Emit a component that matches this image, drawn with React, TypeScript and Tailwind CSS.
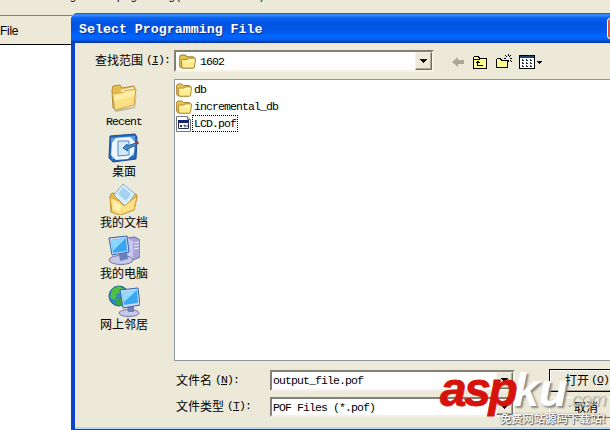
import { ReactNode } from "react";

const mono = "font-['Liberation_Mono','Noto_Sans_CJK_SC',monospace] text-[11.5px] tracking-[-0.9px]";
const cjk = "font-['Noto_Sans_CJK_SC',sans-serif] text-[12px] tracking-normal";

const FolderIcon = ({ className }: { className?: string }) => (
    <svg viewBox="0 0 16 14" className={className}>
        <path d="M.6 3Q.6 1.200 2.200 1h3.600l1.600 1.500h5.400q1.500 0 1.500 1.500v7.500q0 1-1 1.500H3q-2.400-.5-2.400-2z" fill="#e8c54e" stroke="#aa8532" />
        <path d="M2.300 6Q2.500 5 3.600 5h4l1.600-1.200H15q.7 0 .6.9l-1.100 7.500q-.2 1-1.200 1H3.900q-1 0-1.100-1z" fill="#fbed8e" stroke="#a8822e" strokeWidth=".9" />
        <path d="M4 6.500h4l2-1.200h4l-.5 2H4z" fill="#fffbc8" />
    </svg>
);

const PofIcon = () => (
    <svg viewBox="0 0 16 16" className="h-4 w-4">
        <path d="M.5.5h11l3 3v12H.5z" fill="#fff" stroke="#777" />
        <path d="M11.500.5v3h3" fill="#ddd" stroke="#777" />
        <path d="M2.500 4.500h10v8h-10z" fill="#fff" stroke="#222c55" />
        <path d="M2 4h11v3H2z" fill="#14246e" />
        <path d="M4 9h2v2H4zM8.500 8.500h1v3h-1zM7.500 9h1v1h-1zM10.500 9h1v2h-1z" fill="#28306a" />
    </svg>
);

const RecentIcon = () => (
    <svg viewBox="0 0 32 32" className="h-8 w-8">
        <path d="M6 29l20-3 3-15-2 16L8 31z" fill="#8e8762" opacity=".5" />
        <path d="M4 9l1-4 7-1 2 3 12-2 1 3-1 15-19 5-2-1z" fill="#e8bc50" stroke="#b78b35" />
        <path d="M13 9l13-3v4l-12 2z" fill="#fffbe0" />
        <path d="M4.500 12.500l10-1 2-2L28 8l-2 16-19 5z" fill="#fbe184" stroke="#d0a345" />
        <path d="M6 14l9-1 2-2 9-1-.5 5L6 20z" fill="#fff3b5" opacity=".7" />
    </svg>
);

const DesktopIcon = () => (
    <svg viewBox="0 0 32 32" className="h-8 w-8">
        <path d="M2 4l25-2 2 3-1 22-23 3-4-4z" fill="#2869b7" stroke="#1b4d92" />
        <path d="M3 6l24-2-1 20-22 3z" fill="#5fa4e0" />
        <path d="M8 6l14-1 5 5-1 11-6 6-12 1-5-5 1-12z" fill="#edf7ff" />
        <path d="M10 9h11v14l-11 1z" fill="#d4eafb" stroke="#5188bd" />
        <path d="M15 16l4-4v2l9-3 1 2-10 4 1 2z" fill="#4a93d2" stroke="#215b9b" />
        <path d="M27 10.500l3-1.500 1 2.500-3 1z" fill="#943d43" />
    </svg>
);

const DocumentsIcon = () => (
    <svg viewBox="0 0 32 32" className="h-8 w-8">
        <path d="M2 13l2-3 6 1 3 2 15-2 1 3-3 13-14 5-9-3z" fill="#e9bb48" stroke="#b98a31" />
        <path d="M15 1l12 10-9 13L6 12z" fill="#d9effb" stroke="#7faed0" />
        <path d="M15 4l8 7-5 7-8-7z" fill="#a5d2ef" />
        <path d="M2 14l9 4 5 5 13-10-3 14-14 5-8-3z" fill="#fce286" stroke="#d0a03d" />
        <path d="M5 18l8 4-2 7-5-3z" fill="#fff2b1" />
    </svg>
);

const ComputerIcon = () => (
    <svg viewBox="0 0 32 32" className="h-8 w-8">
        <path d="M19 4l8-1 5 3v17l-7 3-7-4z" fill="#a6a4da" stroke="#6c6ba8" />
        <path d="M19 4l6 3v19l-6-4z" fill="#c8c8ef" />
        <path d="M26 9l5-1M26 12l5-1M26 15l5-1" stroke="#eeeeff" />
        <ellipse cx="13" cy="26" rx="12" ry="4.500" fill="#c6c8e8" stroke="#7779a9" />
        <path d="M11 20l8-1 1 6-8 2z" fill="#6c80bb" />
        <path d="M1 4l18-2 2 16L4 21z" fill="#d2daf7" stroke="#3160aa" />
        <path d="M3 6l15-2 1 13-14 2z" fill="#39a5ec" />
        <path d="M3 6l15-2-13 13z" fill="#89d7ff" />
    </svg>
);

const NetworkIcon = () => (
    <svg viewBox="0 0 32 32" className="h-8 w-8">
        <circle cx="11" cy="11" r="10" fill="#2787cf" stroke="#216093" />
        <path d="M4 4l7-3 5 3-3 4-4 1-2 6-5-2z" fill="#54bd45" />
        <path d="M7 14l7-1 3 5-5 3-5-2z" fill="#3aa441" />
        <ellipse cx="21" cy="28" rx="10" ry="3.500" fill="#c6c8e8" stroke="#7779a9" />
        <path d="M19 22l7-1v6h-6z" fill="#6d80ba" />
        <path d="M12 5l18-2 2 17-17 3z" fill="#d2daf7" stroke="#3160aa" />
        <path d="M14 7l15-2 1 13-14 2z" fill="#3aa8ee" />
        <path d="M14 7l15-2-13 12z" fill="#93dcff" />
    </svg>
);

const places = [
    { label: "Recent", icon: <RecentIcon />, latin: true },
    { label: "桌面", icon: <DesktopIcon /> },
    { label: "我的文档", icon: <DocumentsIcon /> },
    { label: "我的电脑", icon: <ComputerIcon /> },
    { label: "网上邻居", icon: <NetworkIcon /> },
];

const files = [
    { name: "db", folder: true },
    { name: "incremental_db", folder: true },
    { name: "LCD.pof", folder: false },
];

const DropButton = () => (
    <div className="flex h-full w-[17px] shrink-0 items-center justify-center border border-t-[#f5f3e8] border-l-[#f5f3e8] border-r-[#716f64] border-b-[#716f64] bg-[#ece9d8] shadow-[inset_-1px_-1px_0_#aca899]">
        <svg viewBox="0 0 7 4" className="h-1 w-[7px]" shapeRendering="crispEdges">
            <path d="M0 0h7v1H0zM1 1h5v1H1zM2 2h3v1H2zM3 3h1v1H3z" />
        </svg>
    </div>
);

const Combo = ({ className, children }: { className: string; children: ReactNode }) => (
    <div className={`flex items-center border-2 border-t-[#808076] border-l-[#808076] border-r-[#f5f3e8] border-b-[#f5f3e8] bg-white ${className}`}>
        <div className="flex flex-1 items-center">{children}</div>
        <DropButton />
    </div>
);

const Label = ({ text, hotkey }: { text: string; hotkey: string }) => (
    <div className={`${mono} flex items-center leading-4`}>
        <span className={cjk}>{text}</span>
        <span className="ml-[3px]">
            (<span className="underline">{hotkey}</span>):
        </span>
    </div>
);

const Toolbar = () => (
    <div className="ml-[17px] flex items-center pt-[1px]">
        <svg viewBox="0 0 14 12" className="h-3 w-[14px]">
            <path d="M1 6l6-5v3h6v4H7v3z" fill="#aca899" />
        </svg>
        <svg viewBox="0 0 16 14" className="ml-[7px] h-[14px] w-4" shapeRendering="crispEdges">
            <path d="M1.500 13.500v-11l1-1h4l1 2h7v10z" fill="#ffff8c" stroke="#000" />
            <path d="M2 4.500h6" stroke="#000" />
            <path d="M5.500 6v4.500H11M4 7.500h4M5 6.500h2" stroke="#000" fill="none" />
        </svg>
        <svg viewBox="0 0 17 16" className="mb-[2px] ml-[8px] h-4 w-[17px]" shapeRendering="crispEdges">
            <path d="M.5 14.500v-8l1-1h3l1 2h6v7z" fill="#ffff8c" stroke="#000" />
            <path d="M12 1v2M12 7v2M8 5h2M14 5h2M9 2h1M14 2h1M10 3h1M13 3h1M10 7h1M14 7h1M15 8h1" stroke="#000" />
        </svg>
        <svg viewBox="0 0 24 14" className="ml-[6px] h-[14px] w-6" shapeRendering="crispEdges">
            <path d="M.5.5h15v13H.5z" fill="#fff" stroke="#000" />
            <path d="M1 1h14v2H1z" fill="#174674" />
            <path d="M3 5h2v1H3zM7 5h2v1H7zM11 5h2v1h-2zM3 8h2v1H3zM7 8h2v1H7zM11 8h2v1h-2zM3 11h2v1H3zM7 11h2v1H7zM11 11h2v1h-2zM3 4h1v1H3zM7 4h1v1H7zM11 4h1v1h-1zM3 7h1v1H3zM7 7h1v1H7zM11 7h1v1h-1zM3 10h1v1H3zM7 10h1v1H7zM11 10h1v1h-1z" fill="#234" />
            <path d="M18 6h5v1h-5zM19 7h3v1h-3zM20 8h1v1h-1z" />
        </svg>
    </div>
);

const Watermark = () => (
    <div className="absolute left-[440px] top-[361px] h-[69px] w-[170px] font-['Liberation_Sans',sans-serif] whitespace-nowrap">
        <div className="flex items-baseline leading-[58px] font-bold italic">
            <span className="w-[73px] text-[48px] tracking-[-2.5px] text-[#d5130b] [-webkit-text-stroke:0.8px_#d5130b]">asp</span>
            <span className="w-[54px] text-[47px] tracking-[-0.5px] text-white [text-shadow:2px_2px_2px_#888]">ku</span>
            <span className="text-[20px] font-normal tracking-[-1.2px] text-[#ece9d8]/60 [text-shadow:1px_1px_1px_#777a]">.com</span>
        </div>
        <div className="absolute left-[60px] top-[49px] font-['Noto_Sans_CJK_SC',sans-serif] text-[11.300px] leading-4 font-medium text-white [text-shadow:1px_1px_1px_#555,0_0_2px_#777]">
            免费网站源码下载站!
        </div>
    </div>
);

const FileDialog = () => (
    <div className="absolute left-[71px] top-[13px] flex h-[417px] w-[560px] flex-col overflow-hidden rounded-tl-[7px] bg-[#0a45cc]">
        <div className="flex h-[30px] shrink-0 items-center border-b border-[#083aa8] bg-[linear-gradient(#0a52c8_0%,#3c93ff_7%,#0b63ee_16%,#0054e3_35%,#0057e8_60%,#0066ff_82%,#0060f4_92%,#0040b4_100%)] pl-[8px]">
            <h1 className="mt-[5px] w-[528px] font-['Liberation_Mono',monospace] text-[13.300px] font-bold text-white [text-shadow:1px_1px_0_#0a2f86]">
                Select Programming File
            </h1>
            <div className="mt-[2px] h-[21px] w-[21px] shrink-0 rounded-[3px] border border-white bg-[#d9583c]" />
        </div>
        <div className="ml-[4px] flex flex-1 flex-col border-b border-[#174384] bg-[#ece9d8] shadow-[inset_0_-2px_0_#bcd7f5]">
            <div className="flex h-[36px] shrink-0 items-center pl-[20px]">
                <div className="w-[79px] pb-[2px]">
                    <Label text="查找范围" hotkey="I" />
                </div>
                <Combo className="h-[22px] w-[260px]">
                    <FolderIcon className="ml-[3px] h-[15px] w-[17px]" />
                    <span className={`ml-[4px] pt-[1px] ${mono}`}>1602</span>
                </Combo>
                <Toolbar />
            </div>
            <div className="flex h-[282px] shrink-0">
                <nav className="flex w-[99px] flex-col items-center pt-[2px]">
                    {places.map((p) => (
                        <div key={p.label} className="flex h-[51px] w-full flex-col items-center pr-[1px]">
                            {p.icon}
                            <span className={p.latin ? `${mono} leading-[18px]` : `${cjk} leading-[14px]`}>{p.label}</span>
                        </div>
                    ))}
                </nav>
                <div className="flex-1 border border-[#8b9a9d] bg-white pt-[1px] pl-[1px]">
                    {files.map((f) => (
                        <div key={f.name} className="flex h-[17px] items-center">
                            {f.folder ? <FolderIcon className="h-[14px] w-4" /> : <PofIcon />}
                            <span className={`${mono} leading-[15px] border border-dotted px-[1px] ${f.folder ? "border-transparent" : "border-black"}`}>
                                {f.name}
                            </span>
                        </div>
                    ))}
                </div>
            </div>
            <div className="mt-[8px] flex flex-col gap-[6px] pl-[101px]">
                <div className="flex h-[22px] items-center">
                    <div className="w-[94px]">
                        <Label text="文件名" hotkey="N" />
                    </div>
                    <Combo className="h-[21px] w-[245px]">
                        <span className={`pt-[1px] pl-[1px] ${mono}`}>output_file.pof</span>
                    </Combo>
                    <button className={`ml-[34px] flex h-[23px] w-[76px] items-center border border-black bg-[#ece9d8] pl-[15px] shadow-[inset_1px_1px_0_#fff,inset_-1px_-1px_0_#aca899] ${mono}`}>
                        <span className={cjk}>打开</span>
                        <span className="ml-[2px]">
                            (<span className="underline">O</span>)
                        </span>
                    </button>
                </div>
                <div className="flex h-[20px] items-center">
                    <div className="w-[94px] pb-[2px]">
                        <Label text="文件类型" hotkey="T" />
                    </div>
                    <Combo className="h-[20px] w-[245px]">
                        <span className={`pt-[1px] pl-[1px] ${mono}`}>POF Files (*.pof)</span>
                    </Combo>
                    <button className={`ml-[34px] h-[21px] w-[74px] border border-t-white border-l-white border-r-[#716f64] border-b-[#716f64] bg-[#ece9d8] leading-4 ${cjk}`}>
                        取消
                    </button>
                </div>
            </div>
        </div>
    </div>
);

export default function App() {
    return (
        <div className="relative h-[430px] w-[610px] overflow-hidden bg-[#ece9d8] text-black">
            <div className="flex h-[15px] items-end overflow-hidden pb-[11px] pl-[70px] font-['Liberation_Sans',sans-serif] text-[11px] leading-4">
                <span className="w-[47px] whitespace-nowrap tracking-[0.6px]">ground</span>
                <span className="w-[143px] whitespace-nowrap tracking-[-0.7px]">programming (</span>
                <span>)</span>
            </div>
            <div className="flex h-[30px] w-[72px] items-center border-t border-b border-t-[#808076] border-b-black pt-[2px] font-['Liberation_Sans',sans-serif] text-[12px] tracking-[-0.3px]">
                File
            </div>
            <div className="h-[385px] w-[72px] bg-white" />
            <FileDialog />
            <Watermark />
        </div>
    );
}
